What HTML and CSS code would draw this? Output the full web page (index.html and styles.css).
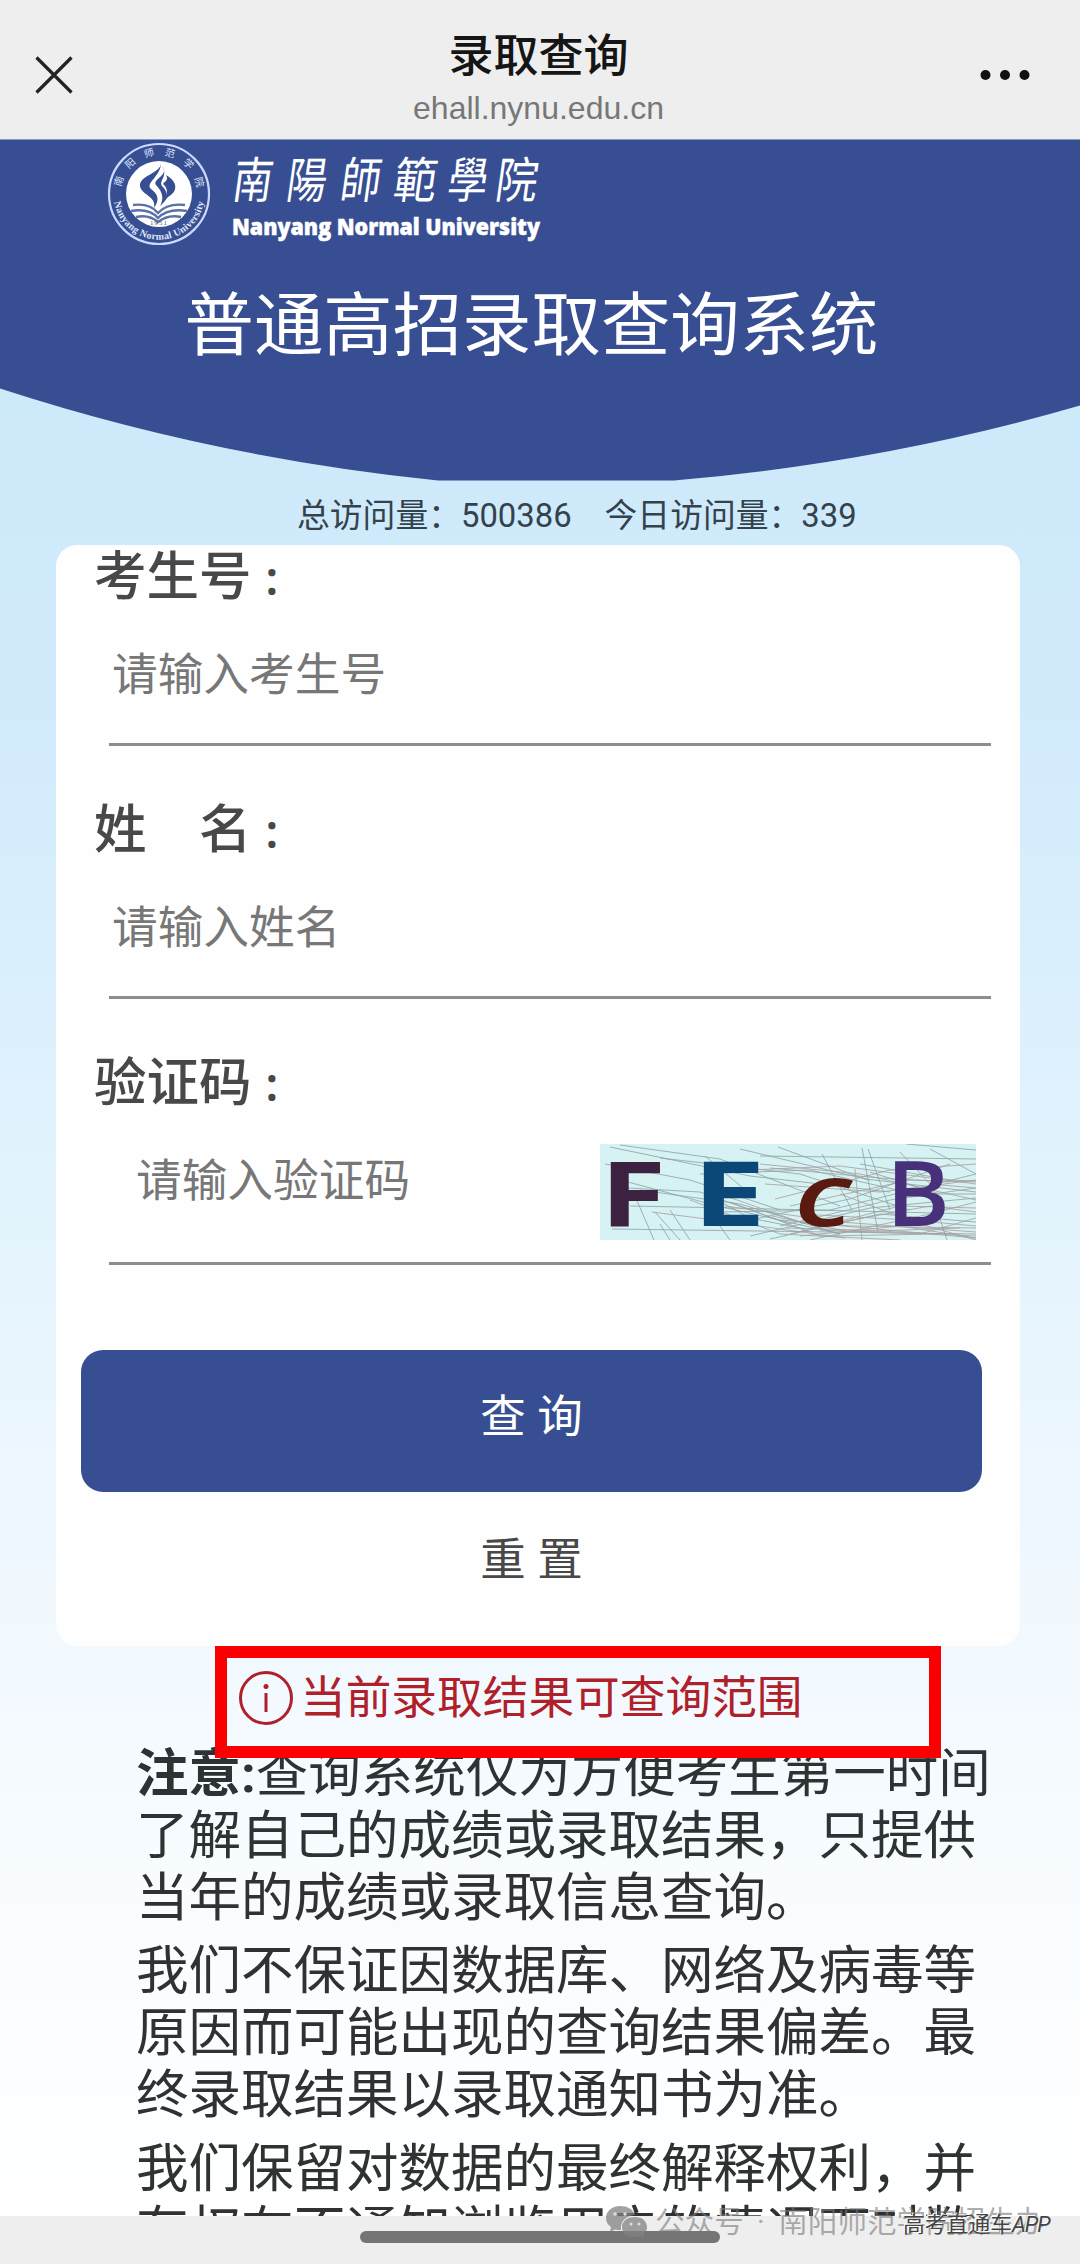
FILE: index.html
```html
<!DOCTYPE html>
<html lang="zh-CN">
<head>
  <meta charset="UTF-8">
  <meta name="viewport" content="width=device-width, initial-scale=1.0">
  <title>录取查询</title>
  <link rel="stylesheet" href="styles.css">
</head>
<body>
  <!-- Browser bar -->
  <header class="nav-bar">
    <svg class="nav-close" viewBox="0 0 38 38"><path d="M1.5 1.5L36.5 36.5M36.5 1.5L1.5 36.5"/></svg>
    <div class="nav-title">
      <h1>录取查询</h1>
      <p>ehall.nynu.edu.cn</p>
    </div>
    <svg class="nav-more" viewBox="0 0 50 12"><circle cx="5.5" cy="6" r="5"/><circle cx="25" cy="6" r="5"/><circle cx="44.5" cy="6" r="5"/></svg>
  </header>

  <main class="page">
    <!-- Banner -->
    <div class="banner">
      <svg class="banner-bg" viewBox="0 0 1080 341"><path d="M0 0H1080V266Q884 323 674 341H438Q212 318 0 249Z"/></svg>
      <svg class="brand" viewBox="100 0 460 116">
        <defs>
          <path id="ringTop" d="M121 61A38.500 38.500 0 1 1 197 61"/>
          <path id="ringBottom" d="M113.800 50A45.500 45.500 0 1 0 204.200 50"/>
        </defs>
        <circle class="seal-ring" cx="159" cy="55" r="50"/>
        <circle class="seal-disc" cx="159" cy="55" r="33"/>
        <text class="seal-cn"><textPath href="#ringTop" startOffset="13" textLength="108">南阳师范学院</textPath></text>
        <text class="seal-en"><textPath href="#ringBottom" startOffset="13" textLength="127">Nanyang Normal University</textPath></text>
        <path class="seal-mark" d="M161 25C160 34 139 37 140 47C141 56 157 57 154 69C160 61 158 55 151 50C145 44 160 38 161 25Z"/>
        <path class="seal-mark" d="M162 27C170 36 152 40 156 46C163 53 164 60 160 67C168 60 169 55 163 48C157 42 169 38 162 27Z"/>
        <path class="seal-mark" d="M166 36C177 42 179 52 168 58L163 64C168 55 168 50 164 46C161 43 170 43 166 36Z"/>
        <path class="seal-line" d="M133 66Q150 64 158 74Q167 64 185 66M131 72Q149 69 158 79Q168 69 187 72M136 78Q149 75 158 83Q168 75 181 78"/>
        <text class="seal-year" x="159" y="86">1951</text>
        <g class="brand-cn" transform="translate(5 0) skewX(-8)">
          <text x="234" y="59" textLength="40" lengthAdjust="spacingAndGlyphs">南</text>
          <text x="288" y="59" textLength="40" lengthAdjust="spacingAndGlyphs">陽</text>
          <text x="342" y="59" textLength="40" lengthAdjust="spacingAndGlyphs">師</text>
          <text x="395" y="59" textLength="43" lengthAdjust="spacingAndGlyphs">範</text>
          <text x="449" y="59" textLength="40" lengthAdjust="spacingAndGlyphs">學</text>
          <text x="497" y="59" textLength="42" lengthAdjust="spacingAndGlyphs">院</text>
        </g>
        <text class="brand-en" x="232" y="96" textLength="308" lengthAdjust="spacingAndGlyphs">Nanyang Normal University</text>
      </svg>
      <h2>普通高招录取查询系统</h2>
    </div>

    <p class="visits"><span>总访问量：500386</span><span>今日访问量：339</span></p>

    <!-- Query form -->
    <form class="card">
      <div class="field">
        <label>考生号<i>:</i></label>
        <input type="text" placeholder="请输入考生号">
      </div>
      <div class="field">
        <label>姓　名<i>:</i></label>
        <input type="text" placeholder="请输入姓名">
      </div>
      <div class="field code">
        <label>验证码<i>:</i></label>
        <div class="code-row">
          <input type="text" placeholder="请输入验证码">
          <svg class="captcha" viewBox="0 0 376 96">
            <rect width="376" height="96" fill="#d6f2f2"/>
            <g class="noise">
              <path d="M10 3L150 32L290 48M20 1L120 15L240 62M30 62L130 64L376 70M5 20L90 36L180 66M12 85L376 90M28 38L110 60L240 90M160 12L376 15M306 0L376 6"/>
              <path d="M35 52L54 96M55 68L80 96M70 66L90 96M60 80L70 96M104 60L130 96M105 12L150 50M140 5L270 36M178 3L265 35L376 48M222 10L252 66M268 5L290 66"/>
              <path d="M60 14L200 30L310 66M100 30L210 26L340 56M120 68L230 66L376 30M130 80L250 55L350 20M150 92L270 64L376 54M170 95L280 70L376 78"/>
            </g>
            <g class="noise warm">
              <path d="M52 68L130 78L245 94M90 56L180 90L300 96M120 50L200 78L376 94M125 62L240 78L376 88M130 58L220 92L340 90M150 26L240 22L376 40M160 20L260 30L376 56M170 24L280 34L350 38"/>
              <path d="M165 40L280 48L376 36M175 55L290 26L376 20M190 62L310 36L376 38M180 82L290 56L376 44M190 90L300 62L376 64M200 70L310 76L376 82M210 96L330 70L376 58M220 86L320 90L376 74"/>
              <path d="M180 76L250 82L376 84M186 84L260 86L376 92M172 72L250 88L360 84M200 92L300 82L376 94M230 80L330 62L376 68M240 50L320 80L376 96M255 25L262 96M300 8L330 40L376 44"/>
            </g>
            <g class="noise">
              <path d="M28 44L100 48L190 80M40 46L140 60L240 90M110 52L150 74L205 85M260 20L350 36L376 37M270 28L340 50L376 50M330 5L376 30M335 60L347 96M262 4L278 88"/>
            </g>
            <text x="0" y="82" fill="#3d2140" font-size="89" textLength="66" lengthAdjust="spacingAndGlyphs">F</text>
            <text x="92" y="82" fill="#0b4779" font-size="89" textLength="74" lengthAdjust="spacingAndGlyphs">E</text>
            <text class="thin" x="194" y="82" fill="#5b1a10" font-size="87" font-style="italic" textLength="58" lengthAdjust="spacingAndGlyphs">c</text>
            <text class="thin" x="286" y="82" fill="#49307b" font-size="91" textLength="64" lengthAdjust="spacingAndGlyphs">B</text>
          </svg>
        </div>
      </div>
      <button type="button" class="btn-query">查 询</button>
      <button type="reset" class="btn-reset">重 置</button>
    </form>

    <!-- Query scope -->
    <div class="scope">
      <svg viewBox="0 0 54 54"><circle cx="27" cy="27" r="25.500"/><path d="M27 22V41"/><circle class="dot" cx="27" cy="15.500" r="2.500"/></svg>
      <span>当前录取结果可查询范围</span>
    </div>

    <div class="notice">
      <p><b>注意:</b>查询系统仅为方便考生第一时间<br>了解自己的成绩或录取结果，只提供<br>当年的成绩或录取信息查询。</p>
      <p>我们不保证因数据库、网络及病毒等<br>原因而可能出现的查询结果偏差。最<br>终录取结果以录取通知书为准。</p>
      <p>我们保留对数据的最终解释权利，并<br>有权在不通知浏览用户的情况下对数</p>
    </div>
  </main>

  <footer class="home-bar"><span></span></footer>

  <!-- Watermarks -->
  <div class="watermark">
    <svg viewBox="0 0 42 34">
      <path d="M14 1C6 1 0 6 0 13C0 17 2 20 5 22L4 27L9 24.500C11 25 13 25 15 25C14 16 20 11 29 10C27 4 21 1 14 1Z"/>
      <path d="M29 12C21 12 16 16 16 22C16 28 21 32 28 32C30 32 32 32 34 31L38 33L37 29C40 27 41 25 41 22C41 16 36 12 29 12Z"/>
      <g class="eyes"><circle cx="9" cy="9" r="1.700"/><circle cx="19" cy="9" r="1.700"/><circle cx="25" cy="19" r="1.500"/><circle cx="33" cy="19" r="1.500"/></g>
    </svg>
    <span>公众号 · 南阳师范学院招生办</span>
  </div>
  <div class="app-mark">高考直通车<i>APP</i></div>
</body>
</html>
```
FILE: styles.css
```css
* {
  box-sizing: border-box;
  margin: 0;
  padding: 0;
}

body {
  position: relative;
  width: 1080px;
  height: 2264px;
  overflow: hidden;
  font-family: Roboto, "Noto Sans CJK SC", sans-serif;
  color: #333;
  background: #eee;
}

/* browser bar */
.nav-bar {
  display: flex;
  align-items: flex-start;
  justify-content: space-between;
  height: 139px;
  padding: 0 50px 0 35px;
  background: #eee;
}

.nav-close {
  width: 38px;
  height: 38px;
  margin-top: 56px;
  fill: none;
  stroke: #222;
  stroke-width: 3.2;
}

.nav-more {
  width: 50px;
  height: 12px;
  margin-top: 69px;
  fill: #111;
}

.nav-title {
  padding: 31px 0 0 24px;
  text-align: center;
}

.nav-title h1 {
  font-size: 45px;
  line-height: 52px;
  font-weight: 500;
  color: #151515;
}

.nav-title p {
  font-family: "Liberation Sans", sans-serif;
  font-size: 32px;
  line-height: 36px;
  margin-top: 7px;
  color: #777;
}

.page {
  height: 2077px;
  overflow: hidden;
  background: linear-gradient(#caeaf7 0, #cfeafb 20%, #d3ebfc 30%, #e1f3fd 49%, #eef7fe 66%, #f8fcff 84%, #fff 100%);
}

/* banner */
.banner {
  position: relative;
  height: 342px;
}

.banner-bg {
  position: absolute;
  top: 0;
  left: 0;
  width: 1080px;
  height: 342px;
  fill: #374f92;
}

.brand {
  position: relative;
  display: block;
  width: 460px;
  height: 116px;
  margin-left: 100px;
}

.seal-ring {
  fill: none;
  stroke: #cbd8ff;
  stroke-width: 2.2;
}

.seal-disc,
.brand-en {
  fill: #fff;
}

.seal-cn,
.seal-en {
  fill: #dfe8ff;
  font-family: "Noto Sans CJK SC", sans-serif;
  font-size: 10px;
}

.seal-en {
  font-family: "Liberation Serif", serif;
  font-weight: bold;
}

.seal-mark {
  fill: #374f92;
}

.seal-line {
  fill: none;
  stroke: #5a70a8;
  stroke-width: 2.4;
}

.seal-year {
  font-family: "Liberation Serif", serif;
  font-size: 7px;
  text-anchor: middle;
  letter-spacing: 1px;
  fill: #555;
}

.brand-cn {
  font-family: "Noto Sans CJK TC", sans-serif;
  font-size: 49px;
  fill: #fff;
}

.brand-en {
  font-family: "Open Sans", sans-serif;
  font-size: 22px;
  font-weight: 800;
  stroke: #fff;
  stroke-width: 0.5;
}

.banner h2 {
  position: relative;
  padding-top: 26px;
  margin-left: -17px;
  text-align: center;
  font-size: 69.4px;
  line-height: 92px;
  font-weight: 400;
  color: #fff;
}

.visits {
  display: flex;
  gap: 33px;
  height: 64px;
  padding-left: 297px;
  font-size: 32.8px;
  line-height: 70px;
  color: #33424c;
}

/* form */
.card {
  width: 964px;
  height: 1101px;
  margin-left: 56px;
  padding: 0 28px 0 25px;
  border-radius: 21px;
  background: #fefefe;
}

.field {
  margin-bottom: 52px;
}

.field label {
  display: block;
  height: 56px;
  padding-left: 13px;
  font-size: 52.5px;
  line-height: 65px;
  font-weight: 500;
  color: #484848;
}

.field label i {
  font-family: "Noto Sans", sans-serif;
  font-style: normal;
  font-weight: 600;
  font-size: 46px;
  margin-left: 14px;
}

.field input {
  display: block;
  width: 882px;
  height: 145px;
  margin-left: 28px;
  padding: 0 0 3px 3px;
  border: none;
  border-bottom: 3px solid #8d8d8d;
  background: none;
  font-family: "Noto Sans CJK SC", sans-serif;
  font-size: 45.7px;
}

.field input::placeholder {
  color: #777;
}

.code {
  margin-bottom: 85px;
}

.code-row {
  display: flex;
  align-items: flex-start;
  width: 882px;
  height: 158px;
  margin-left: 28px;
  border-bottom: 3px solid #8d8d8d;
}

.code-row input {
  width: 491px;
  height: 140px;
  margin: 0;
  padding: 0 0 0 27px;
  border: none;
}

.captcha {
  width: 376px;
  height: 96px;
  margin-top: 37px;
  font-family: "Open Sans", sans-serif;
  font-weight: 700;
}

.captcha .thin {
  font-weight: 600;
}

.noise {
  fill: none;
  stroke: #8b9fa6;
  stroke-width: 0.8;
}

.noise.warm {
  stroke: #a79d9d;
}

.btn-query,
.btn-reset {
  display: block;
  width: 901px;
  height: 142px;
  padding-bottom: 16px;
  border: none;
  border-radius: 22px;
  font-family: Roboto, "Noto Sans CJK SC", sans-serif;
  font-size: 45.5px;
  color: #fff;
  background: #374f92;
}

.btn-reset {
  height: 127px;
  padding: 0;
  color: #484848;
  background: none;
}

/* highlighted scope box, sits above the first notice line */
.scope {
  position: relative;
  z-index: 1;
  display: flex;
  align-items: flex-start;
  width: 726px;
  height: 112px;
  margin-left: 215px;
  padding: 13px 0 0 12px;
  border: 12px solid #fb0000;
  font-size: 45.7px;
  line-height: 54px;
  color: #af2029;
}

.scope svg {
  width: 54px;
  height: 54px;
  margin-right: 7px;
  fill: none;
  stroke: #af2029;
  stroke-width: 3;
}

.scope .dot {
  fill: #af2029;
  stroke: none;
}

.scope span {
  margin-top: 1px;
}

.notice {
  margin: -14px 0 0 136px;
  font-size: 52.5px;
  line-height: 61.8px;
  white-space: nowrap;
  color: #2f3233;
}

.notice p {
  margin-bottom: 12px;
}

/* bottom */
.home-bar {
  height: 48px;
  padding-top: 15px;
  background: #eee;
}

.home-bar span {
  display: block;
  width: 360px;
  height: 12px;
  margin: 0 auto;
  border-radius: 6px;
  background: #757575;
}

.watermark {
  position: absolute;
  left: 606px;
  top: 2204px;
  display: flex;
  align-items: center;
  height: 36px;
  font-size: 29.6px;
  line-height: 36px;
  word-spacing: 6px;
  white-space: nowrap;
  color: rgba(120, 120, 120, 0.6);
}

.watermark svg {
  width: 42px;
  height: 34px;
  margin-right: 7px;
  fill: rgba(130, 130, 130, 0.75);
}

.watermark .eyes {
  fill: #ddd;
}

.app-mark {
  position: absolute;
  left: 903px;
  top: 2208px;
  font-size: 21.8px;
  line-height: 34px;
  color: #444;
  text-shadow: -1px -1px 0 #fff;
}

.app-mark i {
  letter-spacing: -1px;
}
```
